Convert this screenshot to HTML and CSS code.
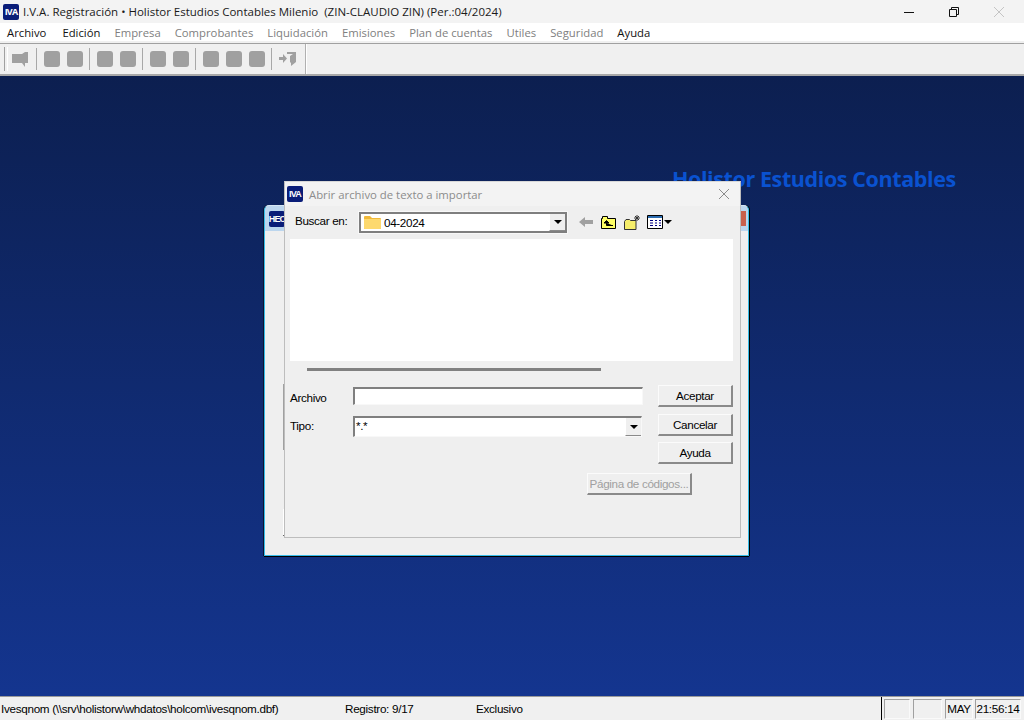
FILE: index.html
```html
<!DOCTYPE html>
<html lang="es">
<head>
    <meta charset="UTF-8">
    <title>I.V.A. Registración</title>
    <link rel="stylesheet" href="styles.css">
</head>
<body>
    <div class="app">
        <!-- Main title bar -->
        <header class="titlebar">
            <span class="logo logo-main">IVA</span>
            <span class="title-text">I.V.A. Registración • Holistor Estudios Contables Milenio &nbsp;(ZIN-CLAUDIO ZIN) (Per.:04/2024)</span>
            <div class="win-controls">
                <svg width="12" height="12" viewBox="0 0 12 12"><path d="M1 6.5h10" stroke="#111" fill="none"/></svg>
                <svg width="12" height="12" viewBox="0 0 12 12"><path d="M1.5 3.5h7v7h-7zM3.5 3.5v-2h7v7h-2" stroke="#111" fill="none"/></svg>
                <svg width="12" height="12" viewBox="0 0 12 12"><path d="M1 1l10 10M11 1L1 11" stroke="#c4c4c4" fill="none"/></svg>
            </div>
        </header>

        <!-- Menu -->
        <nav class="menubar">
            <span>Archivo</span>
            <span class="menu-edit">Edición</span>
            <span class="off">Empresa</span>
            <span class="off">Comprobantes</span>
            <span class="off">Liquidación</span>
            <span class="off">Emisiones</span>
            <span class="off">Plan de cuentas</span>
            <span class="off">Utiles</span>
            <span class="off">Seguridad</span>
            <span>Ayuda</span>
        </nav>

        <!-- Toolbar -->
        <div class="toolbar">
            <div class="toolgroup">
                <i class="handle"></i>
                <svg class="tool-svg" width="17" height="16" viewBox="0 0 17 16"><path d="M0 3h10l3-2h3v11h-3v4l-3-4H0z" fill="#a0a0a0"/></svg>
                <i class="sep"></i>
                <i class="tool"></i><i class="tool"></i>
                <i class="sep"></i>
                <i class="tool"></i><i class="tool"></i>
                <i class="sep"></i>
                <i class="tool"></i><i class="tool"></i>
                <i class="sep"></i>
                <i class="tool"></i><i class="tool"></i><i class="tool"></i>
                <i class="sep"></i>
                <svg class="tool-svg" width="17" height="16" viewBox="0 0 17 16"><path d="M0 6h4V3l4 4.500-4 4.500V9H0z" fill="#a0a0a0"/><path d="M8 1h9v10l-5 4V12l-1-1V5l3-2H8z" fill="#a0a0a0"/></svg>
            </div>
        </div>

        <!-- Desktop area -->
        <main class="desktop">
            <div class="brand">Holistor Estudios Contables</div>

            <div class="back-window">
                <div class="back-head">
                    <span class="logo logo-back">HEC</span>
                    <span class="back-close"></span>
                </div>
                <div class="back-body">
                    <div class="back-group"></div>
                    <div class="back-group-low"></div>
                </div>
            </div>

            <div class="dialog">
                <div class="dialog-head">
                    <span class="logo logo-dialog">IVA</span>
                    <span class="dialog-title">Abrir archivo de texto a importar</span>
                    <svg width="12" height="12" viewBox="0 0 12 12"><path d="M1 1l10 10M11 1L1 11" stroke="#8c8c8c" fill="none"/></svg>
                </div>
                <div class="dialog-body">
                    <div class="look-row">
                        <label class="look-label">Buscar en:</label>
                        <div class="sunken combo look-combo">
                            <svg class="folder" width="17" height="14" viewBox="0 0 17 14"><path d="M0 2a1 1 0 0 1 1-1h5l2 2h8a1 1 0 0 1 1 1v9a1 1 0 0 1-1 1H1a1 1 0 0 1-1-1z" fill="#f0b93a"/><path d="M0 4h17v9a1 1 0 0 1-1 1H1a1 1 0 0 1-1-1z" fill="#fdd96e"/></svg>
                            <span class="combo-text">04-2024</span>
                            <span class="arrow-btn"><b class="caret"></b></span>
                        </div>
                        <div class="look-tools">
                            <svg width="14" height="10" viewBox="0 0 14 10"><path d="M0 5l6-5v3h8v4H6v3z" fill="#a0a0a0"/></svg>
                            <svg class="up-icon" width="15" height="13" viewBox="0 0 15 13"><path d="M.5 12.500v-10h1v-2h5v2h8v10z" fill="#ffff66" stroke="#000"/><path d="M5.500 4.500L3 7h5zM5.500 7v2.500H12" fill="#000" stroke="#000"/></svg>
                            <svg class="new-icon" width="16" height="15" viewBox="0 0 16 15"><path d="M.5 14.500v-8l1.500-2h3.500l1 1h5.500v9z" fill="#f6ee6a" stroke="#333"/><path d="M13 0v6M10 3h6M11 1l4 4M15 1l-4 4" stroke="#333"/></svg>
                            <span class="view-btn">
                                <svg width="16" height="14" viewBox="0 0 16 14"><path d="M.5.5h15v13H.5z" fill="#fff" stroke="#000"/><path d="M1 2h14" stroke="#2b6cb0" stroke-width="2"/><path d="M3 5.500h3M8 5.500h2M12 5.500h2M3 8h3M8 8h2M12 8h2M3 10.500h3M8 10.500h2M12 10.500h2" stroke="#00007f"/></svg>
                                <b class="caret"></b>
                            </span>
                        </div>
                    </div>

                    <div class="file-list"></div>
                    <div class="scroll-thumb"></div>

                    <div class="form-area">
                        <div class="fields">
                            <div class="field field-name">
                                <label>Archivo</label>
                                <div class="sunken input-box"></div>
                            </div>
                            <div class="field field-type">
                                <label>Tipo:</label>
                                <div class="sunken combo">
                                    <span class="combo-text">*.*</span>
                                    <span class="arrow-btn"><b class="caret"></b></span>
                                </div>
                            </div>
                        </div>
                        <div class="buttons">
                            <button class="btn">Aceptar</button>
                            <button class="btn">Cancelar</button>
                            <button class="btn">Ayuda</button>
                        </div>
                    </div>
                    <div class="code-row">
                        <button class="btn btn-off">Página de códigos...</button>
                    </div>
                </div>
            </div>
        </main>

        <!-- Status bar -->
        <footer class="statusbar">
            <span class="st-file">Ivesqnom (\\srv\holistorw\whdatos\holcom\ivesqnom.dbf)</span>
            <span class="st-reg">Registro: 9/17</span>
            <span class="st-mode">Exclusivo</span>
            <div class="st-right">
                <span class="cell cell-a"></span>
                <span class="cell cell-b"></span>
                <span class="cell cell-may">MAY</span>
                <span class="cell cell-time">21:56:14</span>
            </div>
        </footer>
    </div>
</body>
</html>
```

FILE: styles.css
```css
/* Reset */
html, body {
    margin: 0;
    padding: 0;
    height: 100%;
    overflow: hidden;
    font-family: "Liberation Sans", Arial, sans-serif;
    font-size: 12px;
    color: #000;
}

.app {
    display: flex;
    flex-direction: column;
    width: 1024px;
    height: 720px;
    background-color: #f0f0f0;
}

/* Logos */
.logo {
    display: flex;
    align-items: center;
    justify-content: center;
    background-color: #0a1d78;
    color: #fff;
    font-weight: bold;
    border-radius: 2px;
}

.logo-main, .logo-dialog {
    width: 16px;
    height: 16px;
    font-size: 9px;
    letter-spacing: -0.8px;
    flex: none;
}

/* Title bar */
.titlebar {
    height: 23px;
    display: flex;
    align-items: center;
    padding-left: 3px;
    background-color: #f3f3f3;
    font-family: "Open Sans", sans-serif;
    font-size: 11.5px;
    color: #1a1a1a;
}

.title-text {
    margin-left: 4px;
    white-space: nowrap;
}

.win-controls {
    margin-left: auto;
    display: flex;
    gap: 33px;
    padding-right: 19px;
}

/* Menu */
.menubar {
    height: 18px;
    display: flex;
    align-items: center;
    gap: 14px;
    padding-left: 7px;
    background-color: #fff;
    font-family: "Open Sans", sans-serif;
    font-size: 11.3px;
    color: #111;
}

.menubar .off {
    color: #808080;
}

.menu-edit {
    margin-left: 2px;
}

/* Toolbar */
.toolbar {
    height: 30px;
    margin-top: 2px;
    border-top: 1px solid #a0a0a0;
    border-bottom: 2px solid #a8a8a8;
    background-color: #f0f0f0;
}

.toolgroup {
    width: 306px;
    height: 30px;
    display: flex;
    align-items: center;
    border-right: 1px solid #b0b0b0;
    box-shadow: 1px 0 0 #fff;
    box-sizing: border-box;
    padding-left: 4px;
}

.handle {
    width: 2px;
    height: 24px;
    border-left: 1px solid #a0a0a0;
    border-right: 1px solid #fff;
    margin-right: 4px;
}

.tool-svg {
    flex: none;
}

.tool {
    width: 16px;
    height: 16px;
    margin-right: 7px;
    background-color: #a0a0a0;
    border-radius: 3px;
}

.sep {
    width: 1px;
    height: 22px;
    background-color: #a8a8a8;
    margin: 0 7px 0 7px;
}

.tool + .sep {
    margin-left: -1px;
}

/* Desktop */
.desktop {
    flex: 1;
    position: relative;
    background: linear-gradient(#0c1f50, #14358f);
    overflow: hidden;
}

.brand {
    position: absolute;
    left: 672px;
    top: 88px;
    font-family: "Open Sans", sans-serif;
    font-size: 21.5px;
    font-weight: bold;
    letter-spacing: -0.4px;
    color: #0a52d0;
    white-space: nowrap;
}

/* Window behind the dialog */
.back-window {
    position: absolute;
    left: 264px;
    top: 129px;
    width: 485px;
    height: 351px;
    box-sizing: border-box;
    display: flex;
    flex-direction: column;
    background-color: #bcd6ee;
    border: 1px solid #36bce8;
    border-top-color: #d6e6f4;
    border-radius: 5px 5px 0 0;
    box-shadow: -1px 0 0 #0a1430, 1px 0 0 #000, 0 1px 0 #000;
}

.back-head {
    height: 25px;
    display: flex;
    align-items: center;
    justify-content: space-between;
    padding: 0 2px 0 4px;
}

.logo-back {
    width: 16px;
    height: 16px;
    font-size: 9px;
    letter-spacing: -0.8px;
    white-space: nowrap;
}

.back-close {
    width: 6px;
    height: 15px;
    background-color: #c8604c;
}

.back-body {
    flex: 1;
    background-color: #efefef;
    padding: 153px 0 0 18px;
}

.back-group {
    height: 66px;
    width: 1px;
    background-color: #a0a0a0;
}

.back-group-low {
    height: 26px;
    width: 1px;
    margin-top: 59px;
    background-color: #fff;
    border-bottom: 1px solid #666;
}

/* Dialog */
.dialog {
    position: absolute;
    left: 284px;
    top: 105px;
    width: 457px;
    height: 357px;
    box-sizing: border-box;
    display: flex;
    flex-direction: column;
    background-color: #efefef;
    border: 1px solid #bdbdbd;
    border-top-color: #d8d8d8;
}

.dialog-head {
    height: 24px;
    display: flex;
    align-items: center;
    padding: 0 10px 0 2px;
    background-color: #f3f3f3;
}

.dialog-title {
    flex: 1;
    margin-left: 6px;
    font-family: "Open Sans", sans-serif;
    font-size: 11.35px;
    color: #8c8c8c;
}

.dialog-body {
    flex: 1;
    display: flex;
    flex-direction: column;
    padding: 5px 7px 0 5px;
    font-size: 11.7px;
    letter-spacing: -0.35px;
}

/* Look in row */
.look-row {
    height: 22px;
    display: flex;
    align-items: center;
}

.look-label {
    width: 69px;
    padding-left: 5px;
    box-sizing: border-box;
    margin-top: -3px;
}

.sunken {
    box-sizing: border-box;
    background-color: #fff;
    border: 2px solid #7f7f7f;
    border-right: 1px solid #f8f8f8;
    border-bottom: 1px solid #f8f8f8;
}

.combo {
    display: flex;
    align-items: center;
    width: 289px;
    height: 21px;
}

.look-combo {
    width: 208px;
    border-right: 2px solid #7f7f7f;
    border-bottom: 2px solid #7f7f7f;
    outline: 1px solid #f8f8f8;
}

.folder {
    margin: 0 3px 0 3px;
    flex: none;
}

.combo-text {
    flex: 1;
    white-space: nowrap;
}

.field-type .combo-text {
    padding-left: 1px;
    margin-top: -3px;
}

.arrow-btn {
    width: 16px;
    height: 100%;
    display: flex;
    align-items: center;
    justify-content: center;
    background-color: #efefef;
    border-left: 1px solid #fff;
    border-bottom: 1px solid #8a8a8a;
    box-sizing: border-box;
}

.caret {
    display: block;
    width: 0;
    height: 0;
    border-left: 4px solid transparent;
    border-right: 4px solid transparent;
    border-top: 4px solid #000;
}

.look-tools {
    display: flex;
    align-items: center;
    gap: 7px;
    margin-left: 12px;
}

.up-icon, .new-icon {
    margin-left: 1px;
}

.view-btn {
    display: flex;
    align-items: center;
    gap: 1px;
}

/* File list */
.file-list {
    height: 122px;
    margin-top: 6px;
    background-color: #fff;
}

.scroll-thumb {
    width: 294px;
    height: 3px;
    margin: 7px 0 0 17px;
    background-color: #808080;
}

/* Bottom form */
.form-area {
    display: flex;
    margin-top: 14px;
}

.fields {
    width: 353px;
    padding-top: 2px;
}

.field {
    display: flex;
    align-items: center;
}

.field label {
    width: 63px;
    flex: none;
}

.field-name label {
    padding-top: 2px;
}

.field-type label {
    margin-top: -2px;
}

.input-box {
    width: 290px;
    height: 18px;
}

.field-type {
    margin-top: 11px;
}

.buttons {
    width: 75px;
    margin-left: 15px;
    display: flex;
    flex-direction: column;
    gap: 6px;
}

.btn {
    width: 75px;
    height: 22px;
    padding: 0;
    box-sizing: border-box;
    font-family: "Liberation Sans", Arial, sans-serif;
    font-size: 11.7px;
    letter-spacing: -0.35px;
    color: #000;
    background-color: #efefef;
    border: 2px solid #8a8a8a;
    border-top: 1px solid #fbfbfb;
    border-left: 1px solid #fbfbfb;
}

.buttons .btn:nth-child(2) {
    margin-top: 1px;
}

.code-row {
    display: flex;
    padding-left: 297px;
    margin-top: 9px;
}

.btn-off {
    width: 105px;
    color: #a0a0a0;
}

/* Status bar */
.statusbar {
    height: 24px;
    display: flex;
    align-items: center;
    border-top: 1px solid #9a9a9a;
    box-sizing: border-box;
    background-color: #f0f0f0;
    font-size: 11.7px;
    letter-spacing: -0.3px;
    padding-left: 1px;
}

.st-file {
    width: 344px;
}

.st-reg {
    width: 131px;
}

.st-right {
    margin-left: auto;
    height: 100%;
    box-sizing: border-box;
    display: flex;
    align-items: center;
    padding: 0 3px 0 2px;
    border-left: 1px solid #000;
}

.cell {
    box-sizing: border-box;
    height: 20px;
    border: 1px solid #a0a0a0;
    border-right-color: #fafafa;
    border-bottom-color: #fafafa;
    display: flex;
    align-items: center;
    justify-content: center;
}

.cell-a {
    width: 26px;
}

.cell-b {
    width: 29px;
    margin-left: 3px;
}

.cell-may {
    width: 28px;
    margin-left: 3px;
}

.cell-time {
    width: 46px;
    margin-left: 2px;
}
```
